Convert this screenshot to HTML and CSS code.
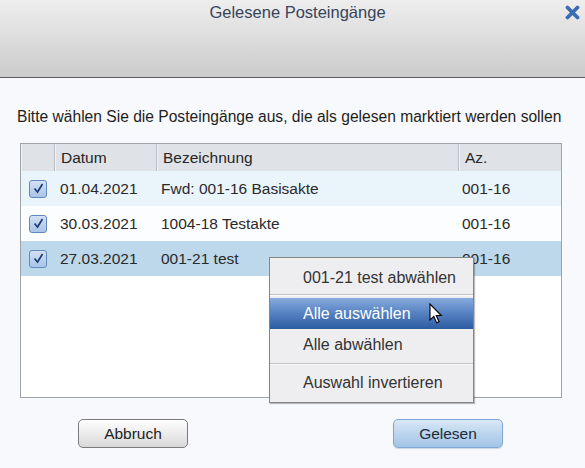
FILE: index.html
```html
<!DOCTYPE html>
<html lang="de">
<head>
<meta charset="utf-8">
<link rel="stylesheet" href="styles.css">
</head>
<body>
<div class="dialog">
  <div class="titlebar">
    <span class="title">Gelesene Posteingänge</span>
    <svg class="close" width="15" height="15" viewBox="0 0 15 15"><path d="M2.5 2.5 L12.5 12.5 M12.5 2.5 L2.5 12.5" stroke="#3a6cb4" stroke-width="3.8" stroke-linecap="round"/></svg>
  </div>
  <div class="content">
    <p class="instr">Bitte wählen Sie die Posteingänge aus, die als gelesen marktiert werden sollen</p>
    <div class="table">
      <div class="row head">
        <div class="c c0"></div>
        <div class="c c1">Datum</div>
        <div class="c c2">Bezeichnung</div>
        <div class="c c3">Az.</div>
      </div>
      <div class="row r1">
        <div class="c c0"><span class="cb"><svg width="17" height="17" viewBox="0 0 17 17"><path d="M4.5 8.5 L7.5 12 L12.5 4" fill="none" stroke="#1d3d78" stroke-width="1.7"/></svg></span></div>
        <div class="c c1">01.04.2021</div>
        <div class="c c2">Fwd: 001-16 Basisakte</div>
        <div class="c c3">001-16</div>
      </div>
      <div class="row r2">
        <div class="c c0"><span class="cb"><svg width="17" height="17" viewBox="0 0 17 17"><path d="M4.5 8.5 L7.5 12 L12.5 4" fill="none" stroke="#1d3d78" stroke-width="1.7"/></svg></span></div>
        <div class="c c1">30.03.2021</div>
        <div class="c c2">1004-18 Testakte</div>
        <div class="c c3">001-16</div>
      </div>
      <div class="row r3">
        <div class="c c0"><span class="cb"><svg width="17" height="17" viewBox="0 0 17 17"><path d="M4.5 8.5 L7.5 12 L12.5 4" fill="none" stroke="#1d3d78" stroke-width="1.7"/></svg></span></div>
        <div class="c c1">27.03.2021</div>
        <div class="c c2">001-21 test</div>
        <div class="c c3">001-16</div>
      </div>
    </div>
    <div class="buttons">
      <button class="btn cancel">Abbruch</button>
      <button class="btn ok">Gelesen</button>
    </div>
  </div>
  <div class="menu">
    <div class="item">001-21 test abwählen</div>
    <div class="sep"></div>
    <div class="item active">Alle auswählen</div>
    <div class="item">Alle abwählen</div>
    <div class="sep sep2"></div>
    <div class="item">Auswahl invertieren</div>
  </div>
  <svg class="cursor" width="14" height="22" viewBox="0 0 14 22"><path d="M1 1 L1 17 L4.8 13.4 L7.6 19.8 L10 18.8 L7.3 12.5 L12.3 12.5 Z" fill="#fff" stroke="#000" stroke-width="1.1" stroke-linejoin="miter"/></svg>
</div>
</body>
</html>
```
FILE: styles.css
```css
html, body {
  margin: 0;
  padding: 0;
}
body {
  width: 585px;
  height: 468px;
  overflow: hidden;
  background: #f8f9fc;
  font-family: "Liberation Sans", Arial, sans-serif;
  font-size: 15.5px;
  color: #2a2a2a;
}
.dialog {
  position: relative;
  width: 585px;
  height: 468px;
}
.titlebar {
  position: relative;
  height: 77px;
  border-bottom: 1px solid #5e5e5e;
  background: linear-gradient(#eeeeee, #cbcbcb);
  text-align: center;
}
.title {
  display: inline-block;
  margin-top: 2px;
  padding-left: 10px;
  font-size: 16.5px;
  line-height: 20px;
  color: #37445a;
}
.close {
  position: absolute;
  right: 5px;
  top: 5px;
}
.content {
  padding-top: 30px;
}
.instr {
  margin: 0 0 17px 17px;
  font-size: 15.6px;
  line-height: 18px;
  color: #1e1e1e;
  white-space: nowrap;
}
.table {
  margin-left: 20px;
  width: 540px;
  height: 253px;
  border: 1px solid #9ea3a9;
  background: #ffffff;
}
.row {
  display: grid;
  grid-template-columns: 34px 102px 302px 1fr;
  height: 35px;
  align-items: center;
}
.row.head {
  height: 27px;
  background: #dfe2e6;
  align-items: stretch;
}
.head .c {
  display: flex;
  align-items: center;
  padding-left: 6px;
  border-right: 1px solid #b9bec5;
  box-shadow: inset 1px 0 0 #f2f3f5;
  color: #262626;
}
.head .c0 { padding-left: 0; }
.head .c3 { border-right: none; }
.r1 { background: #eaf4fb; }
.r2 { background: #fcfdfe; }
.r3 { background: #bdd8ea; }
.c { white-space: nowrap; line-height: 18px; }
.row:not(.head) .c1 { padding-left: 5px; }
.row:not(.head) .c2 { padding-left: 4px; }
.row:not(.head) .c3 { padding-left: 3px; }
.c0 { display: flex; justify-content: center; }
.cb {
  display: block;
  width: 16px;
  height: 16px;
  border: 1px solid #6388bd;
  border-radius: 3px;
  background: linear-gradient(#d3e2f4, #a8c4e7);
  position: relative;
}
.cb svg {
  position: absolute;
  left: -0.5px;
  top: -0.5px;
}
.buttons {
  display: flex;
  justify-content: space-between;
  padding: 21px 82px 0 78px;
}
.btn {
  width: 110px;
  height: 29px;
  font-family: inherit;
  font-size: 15.5px;
  color: #222;
  border-radius: 5px;
  padding: 0;
}
.cancel {
  border: 1px solid #7b7b7b;
  background: linear-gradient(#fdfdfd, #ececec 50%, #d8d8d8);
}
.ok {
  border: 1px solid #82a8d1;
  background: linear-gradient(#d9e8f6, #bcd5ee 50%, #a2c5e6);
  color: #1f2a36;
  box-shadow: 0 1px 1px rgba(120,150,190,0.35);
}
.menu {
  position: absolute;
  left: 269px;
  top: 257px;
  width: 203px;
  padding: 4px 0 4px;
  border: 1px solid #858585;
  background: #eeeef1;
  box-shadow: 1px 1px 1px rgba(0,0,0,0.25);
  color: #333;
  font-size: 16px;
}
.item {
  height: 31px;
  line-height: 31px;
  padding-left: 33px;
  white-space: nowrap;
}
.item.active {
  background: linear-gradient(#86aadc, #5a85c4 45%, #2d5ba2);
  color: #ffffff;
}
.sep {
  box-sizing: content-box;
  height: 1px;
  margin: 1px 0 2px;
  background: #c3c3c8;
  border-bottom: 1px solid #fafafa;
}
.sep2 {
  margin-top: 3px;
}
.cursor {
  position: absolute;
  left: 429px;
  top: 303px;
}
```
